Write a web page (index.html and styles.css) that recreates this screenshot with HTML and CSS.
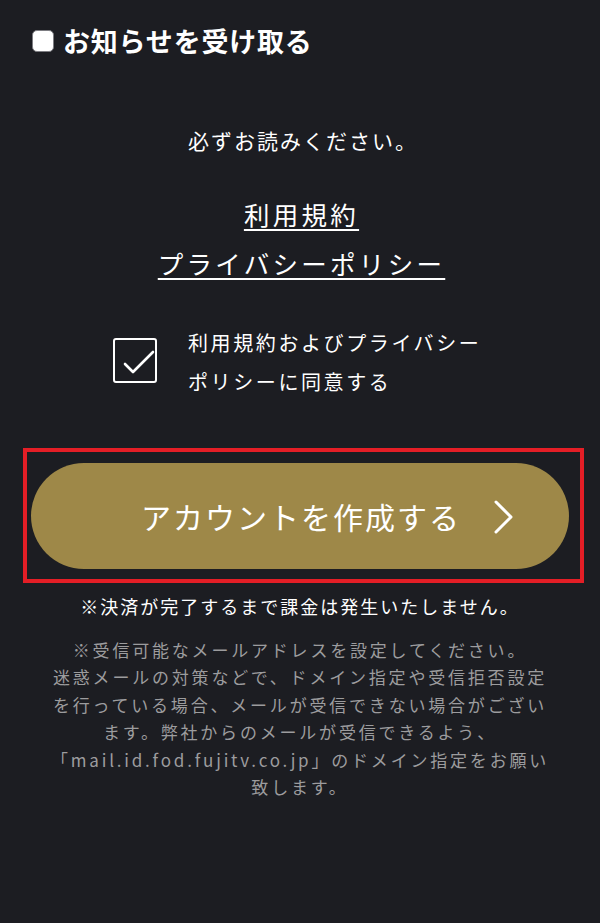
FILE: index.html
```html
<!DOCTYPE html>
<html lang="ja">
<head>
<meta charset="utf-8">
<link rel="stylesheet" href="styles.css">
</head>
<body>
<main class="page">
  <label class="notify">
    <span class="notify-box"></span>
    <span class="notify-text">お知らせを受け取る</span>
  </label>

  <p class="read">必ずお読みください。</p>

  <nav class="links">
    <a class="link" href="#">利用規約</a>
    <a class="link" href="#">プライバシーポリシー</a>
  </nav>

  <div class="agree">
    <span class="agree-box">
      <svg width="44" height="45" viewBox="0 0 44 45"><path d="M12 26 L20 34 L40 14" fill="none" stroke="#fff" stroke-width="2.6" stroke-linecap="round" stroke-linejoin="round"/></svg>
    </span>
    <p class="agree-text">利用規約およびプライバシー<br>ポリシーに同意する</p>
  </div>

  <div class="highlight">
    <button class="cta">
      <span></span>
      <span class="cta-label">アカウントを作成する</span>
      <svg class="chev" width="20" height="34" viewBox="0 0 20 34"><path d="M2 2 L17 17 L2 32" fill="none" stroke="#fff" stroke-width="3" stroke-linecap="round" stroke-linejoin="round"/></svg>
    </button>
  </div>

  <p class="notice">※決済が完了するまで課金は発生いたしません。</p>

  <p class="fine">※受信可能なメールアドレスを設定してください。<br>迷惑メールの対策などで、ドメイン指定や受信拒否設定<br>を行っている場合、メールが受信できない場合がござい<br>ます。弊社からのメールが受信できるよう、<br>「mail.id.fod.fujitv.co.jp」のドメイン指定をお願い<br>致します。</p>
</main>
</body>
</html>
```

FILE: styles.css
```css
html, body {
  margin: 0;
  padding: 0;
  background: #1c1d22;
}
body {
  width: 600px;
  height: 923px;
  overflow: hidden;
  font-family: "Noto Sans CJK JP", "Noto Sans", sans-serif;
  color: #fff;
}
.page {
  display: flex;
  flex-direction: column;
}
p { margin: 0; }

.notify {
  display: flex;
  align-items: center;
  gap: 9px;
  padding: 26px 0 0 32px;
  height: 30px;
}
.notify-box {
  width: 20px;
  height: 20px;
  background: #fff;
  border: 1.5px solid #7d7d82;
  border-radius: 5px;
}
.notify-text {
  font-size: 27px;
  font-weight: 700;
  line-height: 30px;
  letter-spacing: 0.8px;
}

.read {
  margin-top: 69px;
  text-align: center;
  font-size: 21px;
  line-height: 30px;
  letter-spacing: 2px;
  padding-left: 6px;
}

.links {
  margin-top: 39px;
  display: flex;
  flex-direction: column;
  align-items: center;
  gap: 9px;
}
.link {
  color: #fff;
  font-size: 25.5px;
  line-height: 40px;
  letter-spacing: 3.3px;
  text-decoration: underline;
  text-decoration-thickness: 1.5px;
  text-underline-offset: 4px;
  margin-right: -3px;
}

.agree {
  margin-top: 40px;
  display: flex;
  align-items: flex-start;
  gap: 31px;
  padding-left: 113px;
}
.agree-box {
  margin-top: 15px;
  width: 44px;
  height: 45px;
  box-sizing: border-box;
  border: 2px solid #fff;
  border-radius: 3px;
  display: flex;
}
.agree-box svg {
  margin: -2px;
}
.agree-text {
  font-size: 20px;
  line-height: 39px;
  letter-spacing: 2.6px;
}

.highlight {
  margin: 47px 0 0 23px;
  width: 561px;
  box-sizing: border-box;
  border: 4px solid #e41e26;
  padding: 11px 11px 10px 4px;
}
.cta {
  width: 538px;
  height: 106px;
  border: 0;
  border-radius: 53px;
  background: #9e8848;
  color: #fff;
  font-family: inherit;
  display: grid;
  grid-template-columns: 1fr auto 1fr;
  align-items: center;
  padding: 0;
}
.cta-label {
  font-size: 30px;
  letter-spacing: 2px;
  line-height: 40px;
  padding-left: 2px;
}
.chev {
  margin-left: 33px;
  margin-top: 2px;
}

.notice {
  margin-top: 8px;
  text-align: center;
  font-size: 18px;
  line-height: 30px;
  letter-spacing: 2px;
}

.fine {
  margin-top: 15px;
  text-align: center;
  color: #9c9c9e;
  font-size: 17px;
  line-height: 27.4px;
  letter-spacing: 2.8px;
  white-space: nowrap;
}
```
